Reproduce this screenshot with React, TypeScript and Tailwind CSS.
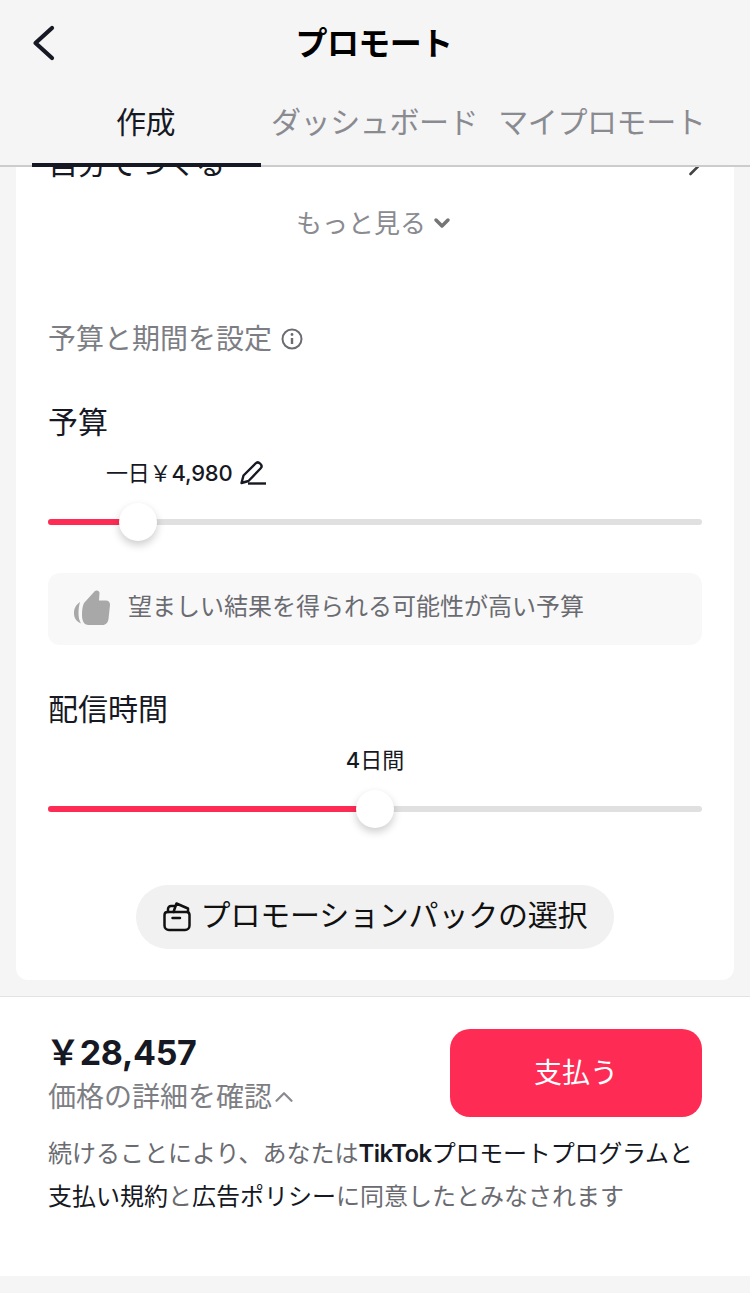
import { ChevronRight, ChevronDown, ChevronUp } from 'lucide-react'

const FONT = "font-['Inter','Noto_Sans_CJK_JP',sans-serif]"

function Slider({ percent, label }: { percent: number; label: React.ReactNode }) {
  return (
    <div>
      {label}
      <div className="relative h-1.5 rounded-full bg-[#e0e0e0]">
        <div className="h-1.5 rounded-full bg-[#fe2c55]" style={{ width: `${percent}%` }} />
        <div
          className="absolute top-1/2 h-[38px] w-[38px] -translate-x-1/2 -translate-y-1/2 rounded-full bg-white shadow-[0_4px_8px_rgba(0,0,0,0.2)]"
          style={{ left: `${percent}%` }}
        />
      </div>
    </div>
  )
}

function BackIcon() {
  return (
    <svg className="absolute left-8 top-[25px]" width="24" height="36" viewBox="0 0 24 36" fill="none" stroke="#161823" strokeWidth="4.2" strokeLinecap="round" strokeLinejoin="round">
      <path d="M20 3 3.500 18 20 33" />
    </svg>
  )
}

function BagIcon() {
  return (
    <svg width="28" height="30" viewBox="0 0 28 30" fill="none" stroke="#111" strokeWidth="2.500" strokeLinejoin="round" strokeLinecap="round">
      <path d="M1.500 13c0-1.700 1.300-3 3-3h19c1.700 0 3 1.300 3 3v10.500c0 2.500-2 4.500-4.500 4.500H6c-2.500 0-4.500-2-4.500-4.500V13z" />
      <path d="M5 10V7a3 3 0 0 1 3-3h4" />
      <path d="M10.500 10l3-8.500L25 6.500V10" />
      <path d="M9.500 16h7.500" />
    </svg>
  )
}

function PencilIcon() {
  return (
    <svg width="26" height="26" viewBox="0 0 26 26" fill="none" stroke="#161823" strokeWidth="2.400" strokeLinejoin="round">
      <path d="M1.500 23 3.500 15.500 15.500 3.500c1.500-1.500 3-1.500 4.500 0l.5.500c1.500 1.500 1.500 3 0 4.500L8.500 21z" />
      <path d="M8 23.500h18" />
    </svg>
  )
}

function ThumbIcon() {
  return (
    <svg className="-mt-[2px]" width="36" height="36" viewBox="0 0 36 36" fill="#a8a8a8">
      <path d="M10 13 20 2c1.500-2.300 5.500-2 5.500 1L25 10.500h7c2.500 0 4.200 2 4 4.500l-1.500 14c-.5 3.500-2.500 6-6 6h-14C10 35 8 31 8 25c0-5 .5-9 2-12z" />
      <path d="M6 12C1.500 15 0 19 0 23c0 5 2 8 7 10.500C5 30 4.500 27 4.500 23c0-4 .5-7.500 1.500-11z" />
    </svg>
  )
}

export default function App() {
  return (
    <div className={`${FONT} flex h-[1293px] w-[750px] flex-col overflow-hidden bg-[#f5f5f5] text-[#161823]`}>
      {/* header + tabs */}
      <div className="relative z-10 h-[167px] shrink-0 border-b-2 border-[#cccccc] bg-[#f5f5f5]">
        <div className="relative flex h-[86px] items-center justify-center pt-[2px]">
          <BackIcon />
          <span className="-ml-[2px] text-[32px] font-bold tracking-[-0.6px] text-black">プロモート</span>
        </div>
        <div className="flex text-[30px] leading-[40px] tracking-[-0.4px] text-[#8a8b91]">
          <div className="relative ml-8 h-[79px] w-[229px] pr-[2px] pt-4 text-center text-[#161823]">
            作成
            <div className="absolute bottom-[-2px] left-0 h-1 w-full bg-[#161823]" />
          </div>
          <div className="ml-[10px] pt-4">ダッシュボード</div>
          <div className="ml-5 pt-4">マイプロモート</div>
        </div>
      </div>

      {/* card */}
      <div className="mx-4 h-[813px] shrink-0 overflow-hidden rounded-b-xl bg-white px-8">
        <div className="-mt-4 flex h-[24px] items-center justify-between text-[30px] leading-[24px] tracking-[-0.4px]">
          <span>自分でつくる</span>
          <ChevronRight className="-mr-[16px] text-[#444]" size={44} strokeWidth={2.600} absoluteStrokeWidth />
        </div>
        <div className="mt-[30px] flex h-[36px] items-center justify-center gap-1 text-[26px] text-[#8a8b91]">
          もっと見る
          <ChevronDown className="text-[#757575]" size={24} strokeWidth={3.5} />
        </div>
        <div className="mt-[78px] flex h-[40px] items-center gap-2 text-[28px] text-[#7d7e84]">
          予算と期間を設定
          <svg width="24" height="24" viewBox="0 0 24 24" fill="none" stroke="#6b6c72" strokeWidth="2">
            <circle cx="12" cy="12" r="9.500" />
            <path d="M12 11v6" strokeWidth="2.400" />
            <circle cx="12" cy="7.500" r="1.400" fill="#6b6c72" stroke="none" />
          </svg>
        </div>
        <div className="mt-[43px] h-[40px] text-[30px] leading-[40px]">予算</div>
        <div className="mt-[13px]">
          <Slider
            percent={13.8}
            label={
              <div className="mb-[28px] ml-[58px] flex h-[36px] items-center gap-[7px] text-[22px] tracking-[-0.2px]">
                <span>
                  一日￥<span className="font-medium">4,980</span>
                </span>
                <PencilIcon />
              </div>
            }
          />
        </div>
        <div className="mt-[48px] flex h-[72px] items-center gap-[18px] rounded-xl bg-[#f8f8f8] pl-[26px] text-[24px] text-[#6a6b71]">
          <ThumbIcon />
          <span className="-mt-[4px]">望ましい結果を得られる可能性が高い予算</span>
        </div>
        <div className="mt-[44px] h-[40px] text-[30px] leading-[40px]">配信時間</div>
        <div className="mt-[16px]">
          <Slider
            percent={50}
            label={
              <div className="mb-[31px] h-[30px] text-center text-[22px] leading-[30px]">
                <span className="font-medium">4</span>日間
              </div>
            }
          />
        </div>
        <div className="mt-[73px] flex justify-center">
          <div className="flex h-16 w-[478px] items-center justify-center gap-[10px] rounded-full bg-[#f1f1f1] text-[30px] tracking-[-0.2px] text-[#111]">
            <BagIcon />
            <span className="-mt-[4px]">プロモーションパックの選択</span>
          </div>
        </div>
      </div>

      {/* footer */}
      <div className="mt-4 h-[280px] shrink-0 border-t border-[#e3e3e3] bg-white px-12">
        <div className="flex justify-between pt-8">
          <div>
            <div className="-ml-[2px] -mt-px h-[50px] text-[34px] font-bold leading-[50px] tracking-[-0.3px]">￥28,457</div>
            <div className="flex h-[38px] items-center text-[28px] text-[#7d7e84]">
              価格の詳細を確認
              <ChevronUp className="-ml-[3px] text-[#8a8b91]" size={30} strokeWidth={1.800} />
            </div>
          </div>
          <div className="flex h-[88px] w-[252px] items-center justify-center rounded-[20px] bg-[#fe2c55] text-[28px] text-white">
            支払う
          </div>
        </div>
        <p className="mt-[15px] text-[24px] leading-[43px] text-[#6a6b71]">
          続けることにより、あなたは
          <span className="tracking-[-0.2px] text-[#161823]">
            <span className="font-semibold tracking-[-0.6px]">TikTok</span>プロモートプログラムと
          </span>
          <br />
          <span className="text-[#161823]">支払い規約</span>と<span className="text-[#161823]">広告ポリシー</span>に同意したとみなされます
        </p>
      </div>
    </div>
  )
}
